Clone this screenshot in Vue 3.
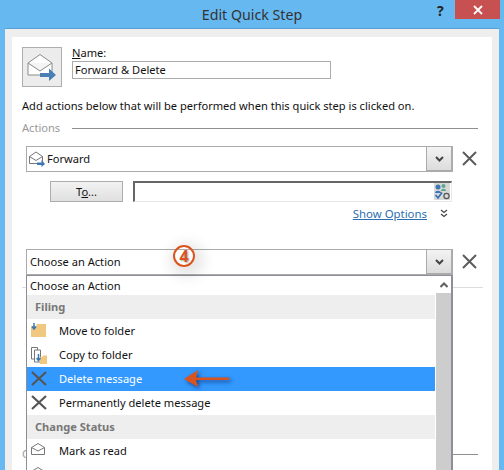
<template>
  <div class="window">
    <div class="titlebar">
      <span class="title">Edit Quick Step</span>
      <span class="help">?</span>
      <span class="close">
        <svg width="10" height="10" viewBox="0 0 10 10"><path d="M1 1L9 9M9 1L1 9" stroke="#fff" stroke-width="1.8" /></svg>
      </span>
    </div>
    <div class="frame">
      <div class="panel">
        <div class="name-row">
          <div class="icon-box">
            <svg width="30" height="28" viewBox="0 0 30 28">
              <path d="M1 10L13 1.5L25 10V22H1Z" fill="#fff" stroke="#8a8a8a" />
              <path d="M1 10L13 18L25 10" fill="#f4f4f4" stroke="#8a8a8a" />
              <path d="M13 20H22V15.5L29 22L22 28V24H13Z" fill="#4a7fb5" />
            </svg>
          </div>
          <div class="name-col">
            <label class="name-label"><u>N</u>ame:</label>
            <div class="name-input">Forward &amp; Delete</div>
          </div>
        </div>
        <p class="hint">Add actions below that will be performed when this quick step is clicked on.</p>
        <div class="section-head">
          <span class="section-label">Actions</span>
          <span class="section-line"></span>
        </div>

        <div class="action-row first">
          <div class="combo">
            <svg class="combo-icon" width="16" height="16" viewBox="0 0 16 16">
              <path d="M0.5 5.5L7 1L13.5 5.5V12.5H0.5Z" fill="#fff" stroke="#777" />
              <path d="M0.5 5.5L7 9.5L13.5 5.5" fill="none" stroke="#777" />
              <path d="M8 11.5H12.5V9L16 13L12.5 16V14H8Z" fill="#3f77b4" />
            </svg>
            <span class="combo-text">Forward</span>
            <span class="combo-btn"><svg width="9" height="6" viewBox="0 0 9 6"><path d="M1 1L4.5 4.5L8 1" fill="none" stroke="#444" stroke-width="2" /></svg></span>
          </div>
          <svg class="remove" width="15" height="15" viewBox="0 0 15 15"><path d="M1 1L14 14M14 1L1 14" stroke="#5c5c5c" stroke-width="2" /></svg>
        </div>

        <div class="to-row">
          <button class="to-btn">T<u>o</u>...</button>
          <div class="to-input">
            <svg width="16" height="17" viewBox="0 0 16 17">
              <rect width="16" height="17" fill="#d8d8d8" />
              <circle cx="4" cy="4" r="2.5" fill="#3f77b4" />
              <path d="M1 10C1 7 7 7 7 10Z" fill="#3f77b4" />
              <circle cx="9.5" cy="3" r="2" fill="#5fa88f" />
              <path d="M7 8C7 5 12 5 12 8Z" fill="#5fa88f" />
              <path d="M1.5 12L4 15L8 9.5" fill="none" stroke="#2f6fb5" stroke-width="1.6" />
              <circle cx="12.5" cy="13" r="2.6" fill="none" stroke="#555" stroke-width="1.2" />
            </svg>
          </div>
        </div>

        <div class="options-row">
          <a class="show-options">Show Options</a>
          <svg width="8" height="9" viewBox="0 0 8 9"><path d="M1 1L4 3.5L7 1M1 5L4 7.5L7 5" fill="none" stroke="#444" stroke-width="1.2" /></svg>
        </div>

        <div class="action-row">
          <div class="combo">
            <span class="combo-text plain">Choose an Action</span>
            <span class="combo-btn"><svg width="9" height="6" viewBox="0 0 9 6"><path d="M1 1L4.5 4.5L8 1" fill="none" stroke="#444" stroke-width="2" /></svg></span>
          </div>
          <svg class="remove" width="15" height="15" viewBox="0 0 15 15"><path d="M1 1L14 14M14 1L1 14" stroke="#5c5c5c" stroke-width="2" /></svg>
        </div>

        <div class="faint-line"></div>
        <div class="section-head lower">
          <span class="section-label">Choose</span>
          <span class="section-line"></span>
        </div>
      </div>
    </div>

    <div class="popup">
      <div class="list">
        <template v-for="item in items" :key="item.label">
          <div v-if="item.head" class="group">{{ item.label }}</div>
          <div v-else class="item" :class="{ plain: item.plain, active: item.active }">
            <svg v-if="item.icon === 'move'" class="item-icon" width="16" height="15" viewBox="0 0 16 15">
              <path d="M0 3H5L6 1H15V14H0Z" fill="#f0c880" />
              <path d="M3 0V5M1 3.5L3 6L5 3.5" fill="none" stroke="#3f77b4" stroke-width="1.5" />
            </svg>
            <svg v-if="item.icon === 'copy'" class="item-icon" width="16" height="17" viewBox="0 0 16 17">
              <path d="M0.5 0.5H6.5V12H0.5Z" fill="#fff" stroke="#777" />
              <path d="M3.5 3H9.5V15H3.5Z" fill="#fff" stroke="#777" />
              <path d="M9 10H11L12 8.5H16V17H9Z" fill="#f0c880" />
              <path d="M7.5 7V13M5.5 11L7.5 13.5L9.5 11" fill="none" stroke="#3f77b4" stroke-width="1.5" />
            </svg>
            <svg v-if="item.icon === 'x'" class="item-icon" width="16" height="15" viewBox="0 0 16 15">
              <path d="M1 1L15 14M15 1L1 14" stroke="#555" stroke-width="2.2" />
            </svg>
            <svg v-if="item.icon === 'mail'" class="item-icon" width="14" height="12" viewBox="0 0 14 12">
              <path d="M0.5 4.5L7 0.5L13.5 4.5V11.5H0.5Z" fill="#fff" stroke="#777" />
              <path d="M0.5 4.5L7 8L13.5 4.5" fill="none" stroke="#777" />
            </svg>
            <span class="item-text">{{ item.label }}</span>
          </div>
        </template>
        <div class="item cut">
          <svg class="item-icon" width="14" height="12" viewBox="0 0 14 12">
            <path d="M0.5 4.5L7 0.5L13.5 4.5V11.5H0.5Z" fill="#fff" stroke="#777" />
          </svg>
        </div>
      </div>
      <div class="scrollbar">
        <span class="scroll-up"><svg width="8" height="6" viewBox="0 0 8 6"><path d="M0.5 5L4 1.5L7.5 5" fill="none" stroke="#606060" stroke-width="2" /></svg></span>
        <span class="scroll-track"></span>
      </div>
    </div>

    <div class="badge">4</div>

    <svg class="callout" width="50" height="20" viewBox="0 0 50 20">
      <path d="M13 8.5H46V11H13L15 18L1 10L15 1Z" fill="#d9541e" />
    </svg>
  </div>
</template>

<script setup>
const items = [
  { label: 'Choose an Action', plain: true },
  { label: 'Filing', head: true },
  { label: 'Move to folder', icon: 'move' },
  { label: 'Copy to folder', icon: 'copy' },
  { label: 'Delete message', icon: 'x', active: true },
  { label: 'Permanently delete message', icon: 'x' },
  { label: 'Change Status', head: true },
  { label: 'Mark as read', icon: 'mail' }
]
</script>

<style>
html, body {
  margin: 0;
  overflow: hidden;
}
</style>

<style scoped>
.window {
  position: relative;
  width: 504px;
  height: 470px;
  overflow: hidden;
  background: #66b8f1;
  font-family: "Noto Sans", sans-serif;
  font-size: 11.1px;
  color: #111;
}

.titlebar {
  position: relative;
  height: 28px;
  display: flex;
  justify-content: center;
  align-items: center;
}

.title {
  font-size: 14.2px;
  color: #333;
}

.help {
  position: absolute;
  left: 437px;
  top: 1px;
  font-weight: 700;
  font-size: 14px;
  color: #222;
}

.close {
  position: absolute;
  left: 455px;
  top: 0;
  width: 45px;
  height: 19px;
  background: #c75050;
  display: flex;
  align-items: center;
  justify-content: center;
}

.frame {
  margin-left: 5px;
  width: 494px;
  height: 442px;
  box-sizing: border-box;
  padding: 8px 7px 0;
  background: #eeeeee;
  border-top: 1px solid #5a9fd4;
}

.panel {
  height: 434px;
  box-sizing: border-box;
  padding: 10px 14px 0 10px;
  background: #fff;
}

.name-row {
  display: flex;
  gap: 10px;
}

.icon-box {
  width: 40px;
  height: 40px;
  box-sizing: border-box;
  border: 1px solid #adadad;
  background: #ececec;
  display: flex;
  align-items: center;
  justify-content: center;
}

.name-label {
  display: block;
  height: 14px;
  line-height: 12px;
}

.name-input {
  width: 259px;
  height: 18px;
  box-sizing: border-box;
  border: 1px solid #ababab;
  padding-left: 2px;
  line-height: 16px;
}

.hint {
  margin: 0;
  margin-top: 11px;
  height: 16px;
  line-height: 16px;
}

.section-head {
  display: flex;
  align-items: center;
  margin-top: 6px;
  height: 16px;
}

.section-label {
  width: 50px;
  padding-bottom: 2px;
  color: #999;
}

.section-line {
  flex: 1;
  height: 1px;
  background: #8f8f8f;
}

.action-row {
  display: flex;
  align-items: center;
  margin-left: 4px;
}

.action-row.first {
  margin-top: 10px;
}

.combo {
  width: 427px;
  height: 26px;
  box-sizing: border-box;
  border: 1px solid #ababab;
  display: flex;
  align-items: center;
}

.combo-icon {
  margin-left: 2px;
  flex: none;
}

.combo-text {
  flex: 1;
  margin-left: 2px;
  padding-bottom: 2px;
}

.combo-text.plain {
  margin-left: 3px;
}

.combo-btn {
  width: 26px;
  height: 24px;
  box-sizing: border-box;
  border-left: 1px solid #ababab;
  border-right: 1px solid #ababab;
  border-bottom: 1px solid #ababab;
  background: linear-gradient(#f3f3f3, #dcdcdc);
  display: flex;
  align-items: center;
  justify-content: center;
}

.remove {
  margin-left: 9px;
  margin-bottom: 2px;
}

.to-row {
  display: flex;
  margin-top: 9px;
  margin-left: 28px;
  gap: 10px;
}

.to-btn {
  width: 73px;
  height: 21px;
  box-sizing: border-box;
  border: 1px solid #adadad;
  background: linear-gradient(#f2f2f2, #e0e0e0);
  font: inherit;
  color: #111;
  padding: 0;
}

.to-input {
  width: 319px;
  height: 21px;
  box-sizing: border-box;
  border-top: 2px solid #666;
  border-left: 2px solid #666;
  border-right: 1px solid #e8e8e8;
  border-bottom: 1px solid #e8e8e8;
  display: flex;
  justify-content: flex-end;
  padding-right: 1px;
}

.options-row {
  display: flex;
  align-items: center;
  justify-content: flex-end;
  gap: 13px;
  height: 16px;
  margin-top: 3px;
  padding-right: 30px;
}

.show-options {
  color: #2b6fb0;
  font-size: 11.4px;
  text-decoration: underline;
}

.options-row + .action-row {
  margin-top: 28px;
}

.faint-line {
  height: 1px;
  margin-top: 12px;
  margin-right: -5px;
  background: #dcdcdc;
}

.section-head.lower {
  margin-top: 158px;
}

.popup {
  position: absolute;
  left: 26px;
  top: 275px;
  width: 427px;
  height: 195px;
  box-sizing: border-box;
  border: 1px solid #8e8e96;
  border-bottom: none;
  border-right-width: 2px;
  background: #fff;
  display: flex;
}

.list {
  flex: 1;
  min-width: 0;
  overflow: hidden;
}

.group {
  height: 24px;
  line-height: 23px;
  padding-left: 8px;
  background: #eeeeee;
  color: #777;
  font-weight: 700;
}

.item {
  height: 24px;
  line-height: 22px;
  display: flex;
  align-items: center;
  position: relative;
  padding-left: 32px;
  box-sizing: border-box;
}

.item.plain {
  height: 19px;
  padding-left: 3px;
}

.item.active {
  background: #3399ff;
  color: #fff;
}

.item-icon {
  position: absolute;
  left: 4px;
  top: 4px;
}

.scrollbar {
  width: 15px;
  margin-left: 1px;
  display: flex;
  flex-direction: column;
}

.scroll-up {
  height: 17px;
  display: flex;
  align-items: center;
  justify-content: center;
}

.scroll-track {
  flex: 1;
  background: #cdcdcd;
}

.badge {
  position: absolute;
  left: 173px;
  top: 245px;
  width: 22px;
  height: 22px;
  box-sizing: border-box;
  border: 2px solid #d9541e;
  border-radius: 50%;
  text-align: center;
  line-height: 18px;
  font-size: 16px;
  font-weight: 700;
  color: #d9541e;
  text-shadow: 1px 1px 2px rgba(0, 0, 0, 0.35);
  box-shadow: 3px 4px 14px 6px rgba(0, 0, 0, 0.1);
}

.callout {
  position: absolute;
  left: 183px;
  top: 369px;
  filter: drop-shadow(2px 2px 2px rgba(0, 0, 50, 0.55));
}
</style>
